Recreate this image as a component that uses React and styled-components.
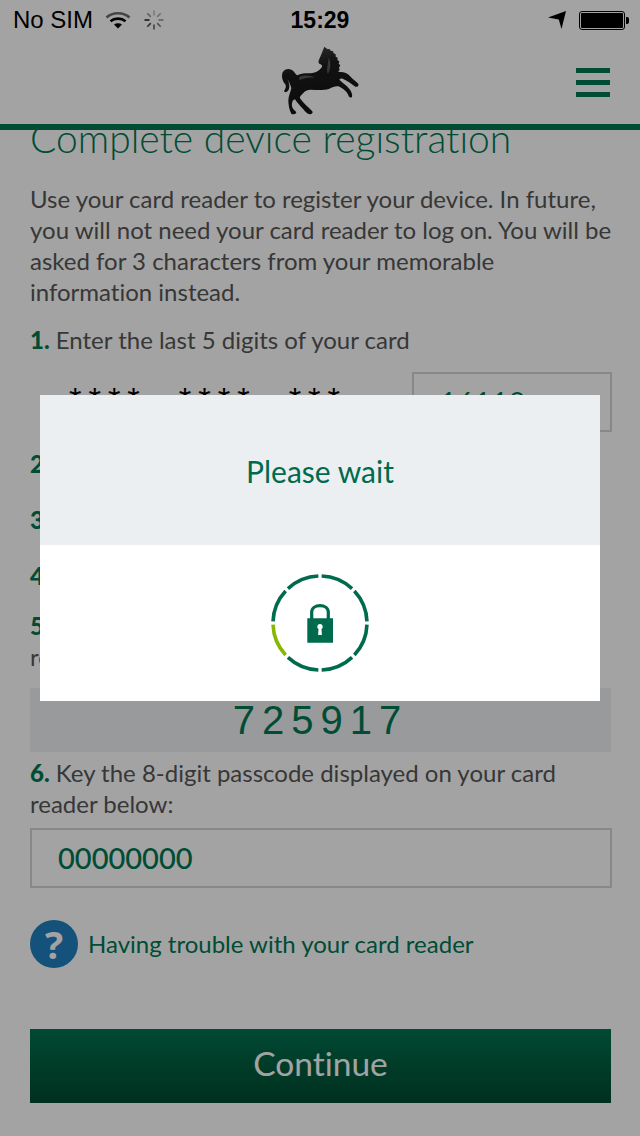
import React from 'react';
import styled, { createGlobalStyle } from 'styled-components';

const GREEN = '#007853';
const LOCK_GREEN = '#006a4d';

const GlobalStyle = createGlobalStyle`
  html, body {
    margin: 0;
    padding: 0;
    background: #fff;
  }
  * {
    box-sizing: border-box;
  }
`;

const polar = (angle, radius) => {
  const rad = (angle * Math.PI) / 180;
  return [50 + radius * Math.cos(rad), 50 + radius * Math.sin(rad)];
};

const arcPath = (from, to, radius) => {
  const [x1, y1] = polar(from, radius);
  const [x2, y2] = polar(to, radius);
  return `M${x1.toFixed(2)} ${y1.toFixed(2)}A${radius} ${radius} 0 0 1 ${x2.toFixed(2)} ${y2.toFixed(2)}`;
};

const Wifi = () => (
  <svg width="26" height="20" viewBox="0 0 26 20" fill="none">
    <path d="M1.5 7.5C7.5 1.8 18.5 1.8 24.5 7.5" stroke="#6d6d6d" strokeWidth="2.6" />
    <path d="M5.5 11.2C9.5 7.8 16.5 7.8 20.5 11.2" stroke="#000" strokeWidth="2.6" />
    <path d="M9 14.4C11.2 12.8 14.8 12.8 17 14.4L13 18.6Z" fill="#000" />
  </svg>
);

const Spinner = () => (
  <svg width="22" height="22" viewBox="0 0 22 22" stroke="#000" strokeWidth="1.6">
    {[0, 45, 90, 135, 180, 225, 270, 315].map((angle, index) => (
      <line
        key={angle}
        x1="11"
        y1="1.5"
        x2="11"
        y2="6.5"
        opacity={[0.25, 0.3, 0.4, 0.5, 0.6, 0.7, 0.85, 0.4][index]}
        transform={`rotate(${angle} 11 11)`}
      />
    ))}
  </svg>
);

const LocationArrow = () => (
  <svg width="20" height="20" viewBox="0 0 20 20">
    <path d="M1 7.5L19 1L14.5 19L11.8 9.5Z" fill="#000" />
  </svg>
);

const Horse = () => (
  <svg width="110" height="80" viewBox="0 0 330 240">
    <defs>
      <linearGradient id="horseSheen" x1="0.2" y1="0" x2="0.5" y2="1">
        <stop offset="0" stopColor="#4a4a4a" />
        <stop offset="0.35" stopColor="#1c1c1c" />
        <stop offset="1" stopColor="#111" />
      </linearGradient>
    </defs>
    <path
      fill="url(#horseSheen)"
      d="M193 17L203 25L209 24L212 29L219 31L221 37L227 40L227 47L233 50L232 57L238 61L236 68L241 73L237 80L239 87L234 92
         C244 93 256 93 264 100C272 108 282 118 295 128C297 134 292 139 286 137
         C276 130 262 118 248 113C243 112 240 113 238 116C248 126 262 134 270 146
         C274 152 278 160 276 168C272 172 267 169 265 163C262 152 250 144 236 136
         C226 134 218 139 208 143C190 149 170 147 152 146C142 146 134 150 130 156
         C124 162 118 166 120 172C130 186 144 198 157 211C160 217 154 221 146 219
         C140 218 136 212 130 205C122 195 112 186 106 176C98 172 95 186 96 196
         C97 204 104 208 109 214C108 220 100 221 94 218C88 208 85 192 85 178
         C85 166 92 152 94 142C92 132 88 124 82 114C88 126 90 138 86 146
         C82 154 74 156 72 150C76 144 80 138 76 130C66 120 64 104 68 94
         C74 82 92 80 102 92C106 97 108 101 112 103C122 98 134 97 146 97
         C162 97 176 92 186 78C187 73 184 70 181 70C176 69 174 62 177 56
         C182 44 188 30 193 17Z"
    />
    <path
      d="M118 108C132 102 150 102 166 110C150 108 132 110 118 118Z M206 50C214 66 212 84 204 98C198 92 204 70 206 50Z"
      fill="#8a8a8a"
      opacity="0.55"
    />
  </svg>
);

const RingLoader = () => {
  const segments = [0, 45, 90, 135, 180, 225, 270, 315];
  return (
    <svg width="100" height="100" viewBox="0 0 100 100" fill="none" strokeWidth="3.6">
      {segments.map((angle) => (
        <path
          key={angle}
          d={arcPath(angle + 2, angle + 43, 47)}
          stroke={angle === 135 ? '#86b800' : LOCK_GREEN}
        />
      ))}
      <path d="M41.7 46V39C41.7 30.5 58.3 30.5 58.3 39V46" stroke={LOCK_GREEN} strokeWidth="3.2" />
      <path
        fillRule="evenodd"
        fill={LOCK_GREEN}
        d="M37.3 45.3H63V69.7H37.3ZM50 51A2.7 2.7 0 0 0 48.5 56L48.1 62H51.9L51.5 56A2.7 2.7 0 0 0 50 51Z"
      />
    </svg>
  );
};

const App = () => (
  <Page>
    <GlobalStyle />
    <StatusBar>
      <StatusGroup>
        <Carrier>No SIM</Carrier>
        <Wifi />
        <Spinner />
      </StatusGroup>
      <Clock>15:29</Clock>
      <StatusGroup $right>
        <LocationArrow />
        <Battery />
      </StatusGroup>
    </StatusBar>
    <Header>
      <HorseSlot>
        <Horse />
      </HorseSlot>
      <MenuButton>
        <MenuLine />
        <MenuLine />
        <MenuLine />
      </MenuButton>
    </Header>
    <Content>
      <Title>Complete device registration</Title>
      <Intro>
        Use your card reader to register your device. In future,
        <br />
        you will not need your card reader to log on. You will be
        <br />
        asked for 3 characters from your memorable
        <br />
        information instead.
      </Intro>
      <Step $top={17}>
        <StepNumber>1.</StepNumber>
        {' '}
        Enter the last 5 digits of your card
      </Step>
      <CardRow>
        <Stars>
          <span>****</span>
          <span>****</span>
          <span>***</span>
        </Stars>
        <DigitsField>16118</DigitsField>
      </CardRow>
      <Step $top={16}><StepNumber>2</StepNumber></Step>
      <Step $top={25}><StepNumber>3</StepNumber></Step>
      <Step $top={25}><StepNumber>4</StepNumber></Step>
      <Step $top={19}><StepNumber>5</StepNumber></Step>
      <Step $top={0}>re</Step>
      <CodeBox>725917</CodeBox>
      <Step $top={5}>
        <StepNumber>6.</StepNumber>
        {' '}
        Key the 8-digit passcode displayed on your card
        <br />
        reader below:
      </Step>
      <PasscodeField>00000000</PasscodeField>
      <HelpRow>
        <HelpIcon>?</HelpIcon>
        <HelpLink>Having trouble with your card reader</HelpLink>
      </HelpRow>
      <ContinueButton>Continue</ContinueButton>
    </Content>
    <Scrim>
      <Modal>
        <ModalHead>Please wait</ModalHead>
        <ModalBody>
          <RingLoader />
        </ModalBody>
      </Modal>
    </Scrim>
  </Page>
);

const Page = styled('div')`
  background: #fff;
  font-family: Lato, "Noto Sans", sans-serif;
  font-variant-ligatures: none;
  height: 1136px;
  overflow: hidden;
  position: relative;
  width: 640px;
`;

const StatusBar = styled('div')`
  align-items: center;
  display: grid;
  grid-template-columns: 1fr auto 1fr;
  height: 40px;
  padding: 0 13px;
`;

const StatusGroup = styled('div')`
  align-items: center;
  display: flex;
  gap: 12px;
  justify-content: ${(props) => (props.$right ? 'flex-end' : 'flex-start')};
`;

const Carrier = styled('span')`
  color: #000;
  font-family: "Liberation Sans", sans-serif;
  font-size: 24px;
`;

const Clock = styled('span')`
  color: #000;
  font-family: "Liberation Sans", sans-serif;
  font-size: 23px;
  font-weight: 700;
`;

const Battery = styled('div')`
  background: #000;
  background-clip: content-box;
  border: 1px solid #000;
  border-radius: 3px;
  height: 19px;
  margin-right: 2px;
  padding: 1px;
  position: relative;
  width: 46px;

  &::after {
    background: #000;
    border-radius: 0 2px 2px 0;
    content: '';
    height: 7px;
    position: absolute;
    right: -5px;
    top: 5px;
    width: 3px;
  }
`;

const Header = styled('header')`
  align-items: center;
  background: #fff;
  border-bottom: 6px solid ${GREEN};
  display: flex;
  height: 90px;
  justify-content: center;
  position: relative;
  z-index: 1;
`;

const HorseSlot = styled('div')`
  display: flex;
  margin: 0 10px 2px 0;
`;

const MenuButton = styled('div')`
  display: flex;
  flex-direction: column;
  gap: 7px;
  position: absolute;
  right: 30px;
  top: 28px;
  width: 34px;
`;

const MenuLine = styled('div')`
  background: ${GREEN};
  height: 5px;
`;

const Content = styled('main')`
  padding: 0 28px 0 30px;
`;

const Title = styled('h1')`
  color: ${GREEN};
  font-size: 39px;
  font-weight: 300;
  line-height: 44px;
  margin: -14px 0 0;
`;

const Intro = styled('p')`
  color: #575757;
  font-size: 24px;
  line-height: 31px;
  margin: 23px 0 0;
`;

const Step = styled('div')`
  color: #575757;
  font-size: 24px;
  line-height: 31px;
  margin-top: ${(props) => props.$top}px;
`;

const StepNumber = styled('span')`
  color: ${GREEN};
  font-weight: 900;
`;

const CardRow = styled('div')`
  align-items: flex-start;
  display: flex;
  justify-content: space-between;
  margin-top: 17px;
`;

const Stars = styled('div')`
  color: #000;
  display: flex;
  font-family: "Liberation Sans", sans-serif;
  font-size: 32px;
  gap: 32px;
  letter-spacing: 7px;
  line-height: 32px;
  padding: 11px 0 0 39px;
`;

const DigitsField = styled('div')`
  border: 2px solid #d3d5d8;
  color: ${GREEN};
  font-size: 28px;
  height: 60px;
  letter-spacing: 1px;
  line-height: 36px;
  padding: 10px 0 0 26px;
  width: 200px;
`;

const CodeBox = styled('div')`
  background: #eff1f4;
  color: ${GREEN};
  font-family: "Liberation Sans", sans-serif;
  font-size: 40px;
  height: 64px;
  letter-spacing: 7px;
  line-height: 64px;
  margin-top: 16px;
  text-align: center;
  width: 581px;
`;

const PasscodeField = styled('div')`
  border: 2px solid #d3d5d8;
  color: ${GREEN};
  font-size: 29px;
  font-weight: 500;
  height: 60px;
  line-height: 56px;
  margin-top: 9px;
  padding-left: 26px;
  width: 582px;
`;

const HelpRow = styled('div')`
  align-items: center;
  display: flex;
  gap: 10px;
  margin-top: 32px;
`;

const HelpIcon = styled('div')`
  background: #2280c0;
  border-radius: 50%;
  color: #fff;
  font-family: "Open Sans", sans-serif;
  font-size: 38px;
  font-weight: 700;
  height: 48px;
  line-height: 48px;
  text-align: center;
  width: 48px;
`;

const HelpLink = styled('span')`
  color: ${GREEN};
  font-size: 24px;
  padding-bottom: 2px;
`;

const ContinueButton = styled('div')`
  background: linear-gradient(#007350, #004b30);
  color: #fff;
  font-size: 33.5px;
  height: 74px;
  line-height: 69px;
  margin-top: 61px;
  text-align: center;
  width: 581px;
`;

const Scrim = styled('div')`
  align-items: center;
  background: rgba(0, 0, 0, 0.36);
  display: flex;
  inset: 0;
  justify-content: center;
  padding-bottom: 40px;
  position: absolute;
  z-index: 2;
`;

const Modal = styled('div')`
  width: 560px;
`;

const ModalHead = styled('div')`
  background: #ebeff2;
  color: ${LOCK_GREEN};
  font-size: 30px;
  height: 150px;
  line-height: 152px;
  text-align: center;
`;

const ModalBody = styled('div')`
  align-items: center;
  background: #fff;
  display: flex;
  height: 156px;
  justify-content: center;
`;

export default App;
